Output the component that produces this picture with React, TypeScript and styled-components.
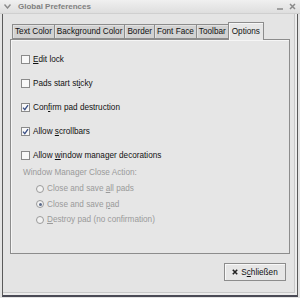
import React from "react";
import styled, { createGlobalStyle } from "styled-components";

const Global = createGlobalStyle`
  html, body { margin: 0; padding: 0; background: #e4e4e4; }
  body { font-family: "Liberation Sans", Arial, sans-serif; font-size: 8.2px; color: #111; }
  u { text-decoration: underline; text-underline-offset: 1px; }
`;

const Frame = styled.div`
  width: 300px;
  height: 298px;
  display: flex;
  flex-direction: column;
  background: #e4e4e4;
  overflow: hidden;
`;

const TitleBar = styled.div`
  height: 14px;
  flex: none;
  display: flex;
  align-items: center;
  padding: 0 4px 0 4px;
  gap: 5px;
  background: linear-gradient(#f0f0f0, #dedede);
  border-bottom: 1px solid #cfcfcf;
  box-sizing: border-box;
`;

const Title = styled.span`
  flex: 1;
  font-weight: bold;
  font-size: 8px;
  color: #808080;
  padding-left: 2px;
`;

const WinButtons = styled.div`
  display: flex;
  gap: 6px;
  align-items: center;
  color: #8a8a8a;
`;

const Body = styled.div`
  flex: 1;
  margin: 0 2px 1px 2px;
  border-left: 1px solid #5a5a5a;
  border-right: 1px solid #5a5a5a;
  border-bottom: 2px solid #4a4a55;
  display: flex;
  flex-direction: column;
  padding: 8px 7px 0 7px;
  box-shadow: inset -2px -2px 0 #ececec, inset -3px -3px 0 #c8c8c8;
`;

const TabRow = styled.div`
  display: flex;
  align-items: flex-end;
  padding-left: 3px;
  height: 17px;
  position: relative;
  z-index: 1;
`;

const Tab = styled.div<{ $active?: boolean }>`
  box-sizing: border-box;
  height: ${(p) => (p.$active ? 18 : 15)}px;
  padding: 0 ${(p) => (p.$active ? 3 : 2)}px;
  display: flex;
  align-items: center;
  justify-content: center;
  border: 1px solid #8c8c8c;
  border-bottom: ${(p) => (p.$active ? "none" : "1px solid #8c8c8c")};
  margin-left: -1px;
  background: ${(p) => (p.$active ? "#e6e6e6" : "#d2d2d2")};
  color: #111;
  white-space: nowrap;
  box-shadow: inset 1px 1px 0 ${(p) => (p.$active ? "#f6f6f6" : "#e2e2e2")};
  margin-bottom: ${(p) => (p.$active ? -1 : 0)}px;
`;

const Panel = styled.div`
  box-sizing: border-box;
  height: 215px;
  border: 1px solid #8c8c8c;
  background: #e6e6e6;
  box-shadow: inset 1px 1px 0 #f6f6f6;
  display: flex;
  flex-direction: column;
  padding: 7px 0 0 10px;
`;

const CheckRow = styled.label`
  height: 24px;
  display: flex;
  align-items: center;
  gap: 3px;
`;

const Box = styled.span`
  width: 7px;
  height: 7px;
  border: 1px solid #8a8a8a;
  background: #f8f8f8;
  display: flex;
  align-items: center;
  justify-content: center;
`;

const SectionLabel = styled.div`
  height: 10px;
  display: flex;
  align-items: center;
  padding-left: 2px;
  color: #9a9a9a;
`;

const RadioGroup = styled.div`
  display: flex;
  flex-direction: column;
  padding: 4px 0 0 15px;
`;

const RadioRow = styled.div`
  height: 15.5px;
  display: flex;
  align-items: center;
  gap: 3px;
  color: #9a9a9a;
`;

const Radio = styled.span<{ $on?: boolean }>`
  width: 6px;
  height: 6px;
  border-radius: 50%;
  border: 1px solid #9a9a9a;
  background: #f2f2f2;
  display: flex;
  align-items: center;
  justify-content: center;
  &::after {
    content: "";
    width: 3px;
    height: 3px;
    border-radius: 50%;
    background: ${(p) => (p.$on ? "#5b6a8a" : "transparent")};
  }
`;

const Footer = styled.div`
  display: flex;
  justify-content: flex-end;
  padding: 9px 4px 0 0;
`;

const Button = styled.button`
  box-sizing: border-box;
  width: 62px;
  height: 18px;
  border: 1px solid #8c8c8c;
  background: #e6e6e6;
  box-shadow: inset 1px 1px 0 #f8f8f8;
  font-family: inherit;
  font-size: 8.2px;
  color: #111;
  display: flex;
  align-items: center;
  justify-content: center;
  gap: 3px;
  padding: 0;
`;

const Check = () => (
  <svg width="7" height="7" viewBox="0 0 7 7">
    <path d="M1 3.6 L2.8 5.6 L6 1.2" stroke="#3a4f85" strokeWidth="1.3" fill="none" />
  </svg>
);

const items: { label: React.ReactNode; on: boolean }[] = [
  { label: <><u>E</u>dit lock</>, on: false },
  { label: <>Pads start st<u>i</u>cky</>, on: false },
  { label: <>Con<u>f</u>irm pad destruction</>, on: true },
  { label: <>Allow <u>s</u>crollbars</>, on: true },
  { label: <>Allow <u>w</u>indow manager decorations</>, on: false },
];

export default function App() {
  return (
    <>
      <Global />
      <Frame>
        <TitleBar>
          <svg width="7" height="5" viewBox="0 0 7 5">
            <path d="M0.5 0.5 L3.5 4 L6.5 0.5" stroke="#8a8a8a" strokeWidth="1.4" fill="none" />
          </svg>
          <Title>Global Preferences</Title>
          <WinButtons>
            <svg width="6" height="6" viewBox="0 0 6 6">
              <path d="M0 5 H6" stroke="#8a8a8a" strokeWidth="1.5" />
            </svg>
            <svg width="7" height="7" viewBox="0 0 7 7">
              <path d="M1 1 L6 6 M6 1 L1 6" stroke="#8a8a8a" strokeWidth="1.5" />
            </svg>
          </WinButtons>
        </TitleBar>
        <Body>
          <TabRow>
            <Tab>Text Color</Tab>
            <Tab>Background Color</Tab>
            <Tab>Border</Tab>
            <Tab>Font Face</Tab>
            <Tab>Toolbar</Tab>
            <Tab $active>Options</Tab>
          </TabRow>
          <Panel>
            {items.map((it, i) => (
              <CheckRow key={i}>
                <Box>{it.on && <Check />}</Box>
                <span>{it.label}</span>
              </CheckRow>
            ))}
            <SectionLabel>Window Manager Close Action:</SectionLabel>
            <RadioGroup>
              <RadioRow>
                <Radio />
                <span>Close and save <u>a</u>ll pads</span>
              </RadioRow>
              <RadioRow>
                <Radio $on />
                <span>Close and save <u>p</u>ad</span>
              </RadioRow>
              <RadioRow>
                <Radio />
                <span><u>D</u>estroy pad (no confirmation)</span>
              </RadioRow>
            </RadioGroup>
          </Panel>
          <Footer>
            <Button>
              <svg width="6" height="6" viewBox="0 0 6 6">
                <path d="M0.8 0.8 L5.2 5.2 M5.2 0.8 L0.8 5.2" stroke="#222" strokeWidth="1.6" />
              </svg>
              <span>S<u>c</u>hließen</span>
            </Button>
          </Footer>
        </Body>
      </Frame>
    </>
  );
}
